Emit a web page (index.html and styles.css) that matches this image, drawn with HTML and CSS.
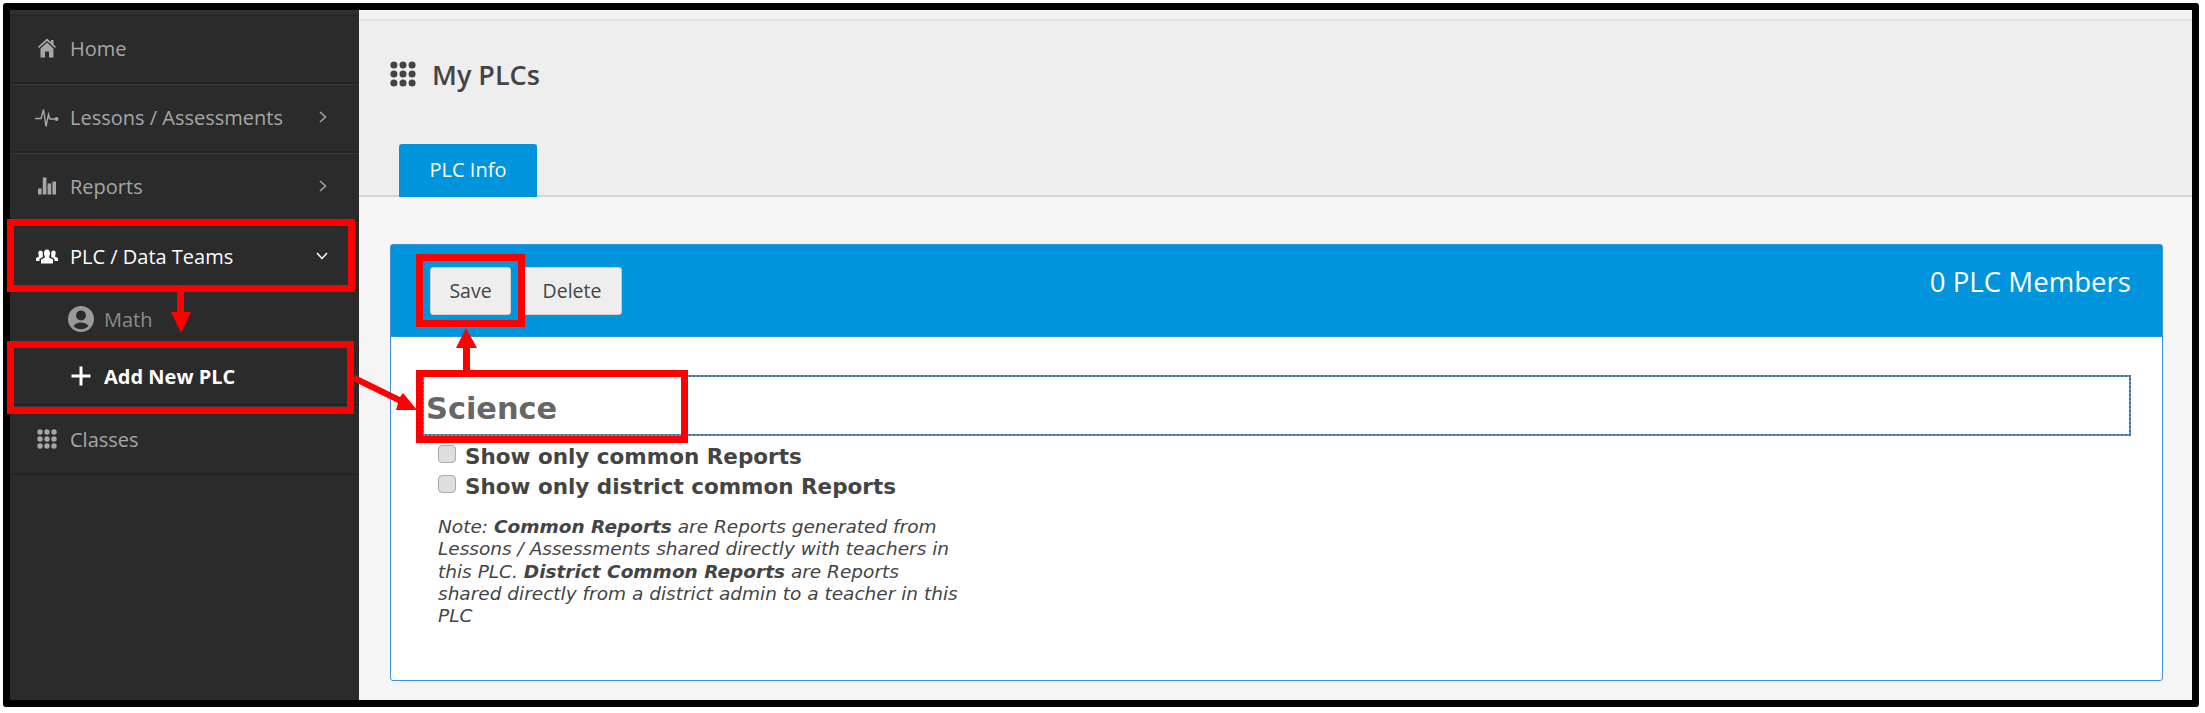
FILE: index.html
```html
<!DOCTYPE html>
<html lang="en">
<head>
<meta charset="utf-8">
<title>My PLCs</title>
<link rel="stylesheet" href="styles.css">
</head>
<body>
<div class="frame">
  <nav class="sidebar">
    <a class="item">
      <svg class="ico" viewBox="-3 -1.500 24 22"><path d="M9 0 L13 3.600 V1.500 H15.500 V5.900 L18 8.300 L17 9.600 L9 2.600 L1 9.600 L0 8.300 Z M2.500 10 L9 4 L15.500 10 V19 H11 V13 H7 V19 H2.500 Z"/></svg>
      <span>Home</span>
    </a>
    <a class="item">
      <svg class="ico" viewBox="0 -0.500 24 22"><path class="ln" d="M0 12 H6 L8.500 3 L11 20 L13.500 8 L15 12.500 H20"/><circle cx="21.500" cy="12.500" r="2"/></svg>
      <span>Lessons / Assessments</span>
      <svg class="chev" viewBox="0 0 8 12"><path d="M1 1 L6.500 6 L1 11"/></svg>
    </a>
    <a class="item">
      <svg class="ico" viewBox="-3 -2.500 24 22"><path d="M0 11 H3.600 V17 H0 Z M4.800 0 H8.400 V17 H4.800 Z M9.600 6 H13.200 V17 H9.600 Z M14.400 4 H18 V17 H14.400 Z"/></svg>
      <span>Reports</span>
      <svg class="chev" viewBox="0 0 8 12"><path d="M1 1 L6.500 6 L1 11"/></svg>
    </a>
    <a class="item active">
      <svg class="ico" viewBox="-1 -3.500 24 22"><path d="M11 1 C13.500 1 14 3 14 5 C14 7 13 8 13 9 L17 11 V15 H5 V11 L9 9 C9 8 8 7 8 5 C8 3 8.500 1 11 1 Z M4.500 2 C6 2 6.800 3 6.800 4.500 C6.800 6 6.500 7.500 7 8.300 L3.500 10.500 V12.500 H0 V9.500 L3 8 C3 7 2.300 6 2.300 4.500 C2.300 3 3 2 4.500 2 Z M17.500 2 C19 2 19.700 3 19.700 4.500 C19.700 6 19 7 19 8 L22 9.500 V12.500 H18.500 V10.500 L15 8.300 C15.500 7.500 15.200 6 15.200 4.500 C15.200 3 16 2 17.500 2 Z"/></svg>
      <span>PLC / Data Teams</span>
      <svg class="chev-down" viewBox="0 0 12 8"><path d="M1 1 L6 6.500 L11 1"/></svg>
    </a>
    <a class="subitem math">
      <svg class="ico-sub" viewBox="0 0 26 26"><path fill-rule="evenodd" d="M13 0 A13 13 0 1 0 13 26 A13 13 0 1 0 13 0 Z M13 4.500 A5 5 0 1 1 13 14.500 A5 5 0 1 1 13 4.500 Z M13 16.500 C16.500 16.500 19 18 20.500 20 A10.300 10.300 0 0 1 5.500 20 C7 18 9.500 16.500 13 16.500 Z"/></svg>
      <span>Math</span>
    </a>
    <a class="subitem add">
      <svg class="ico-sub" viewBox="0 0 26 26"><path d="M11.500 3.500 H14.500 V11.500 H22.500 V14.500 H14.500 V22.500 H11.500 V14.500 H3.500 V11.500 H11.500 Z"/></svg>
      <span>Add New PLC</span>
    </a>
    <a class="item">
      <svg class="ico" viewBox="-2 -1 24 22"><circle cx="3" cy="3" r="2.700"/><circle cx="10" cy="3" r="2.700"/><circle cx="17" cy="3" r="2.700"/><circle cx="3" cy="10" r="2.700"/><circle cx="10" cy="10" r="2.700"/><circle cx="17" cy="10" r="2.700"/><circle cx="3" cy="17" r="2.700"/><circle cx="10" cy="17" r="2.700"/><circle cx="17" cy="17" r="2.700"/></svg>
      <span>Classes</span>
    </a>
  </nav>

  <main class="main">
    <header class="head">
      <div class="title-row">
        <svg class="title-ico" viewBox="0 0 20 20"><circle cx="3" cy="3" r="2.700"/><circle cx="10" cy="3" r="2.700"/><circle cx="17" cy="3" r="2.700"/><circle cx="3" cy="10" r="2.700"/><circle cx="10" cy="10" r="2.700"/><circle cx="17" cy="10" r="2.700"/><circle cx="3" cy="17" r="2.700"/><circle cx="10" cy="17" r="2.700"/><circle cx="17" cy="17" r="2.700"/></svg>
        <h1>My PLCs</h1>
      </div>
      <div class="tab">PLC Info</div>
    </header>
    <section class="content">
      <div class="panel">
        <div class="panel-head">
          <div class="btns">
            <button class="btn save">Save</button>
            <button class="btn del">Delete</button>
          </div>
          <div class="members">0 PLC Members</div>
        </div>
        <div class="panel-body">
          <div class="name-input">Science</div>
          <label class="check"><input type="checkbox"><span>Show only common Reports</span></label>
          <label class="check"><input type="checkbox"><span>Show only district common Reports</span></label>
          <p class="note">Note: <b>Common Reports</b> are Reports generated from Lessons / Assessments shared directly with teachers in this PLC. <b>District Common Reports</b> are Reports shared directly from a district admin to a teacher in this PLC</p>
        </div>
      </div>
    </section>
  </main>
</div>

<div class="mark m1"></div>
<div class="mark m2"></div>
<div class="mark m3"></div>
<div class="mark m4"></div>
<svg class="arrows" viewBox="0 0 2205 713">
  <path d="M177 292 H184 V312 H191 L181 333 L171 312 H177 Z"/>
  <path d="M463 370 H470 V348 H477 L466 328 L456 348 H463 Z"/>
  <path d="M355 375 L400 397 L403 393 L417 410 L396 410 L398 403 L353 381 Z"/>
</svg>
</body>
</html>
```
FILE: styles.css
```css
* { box-sizing: border-box; }
html, body { margin: 0; padding: 0; background: #fff; }
body { width: 2205px; height: 713px; position: relative; overflow: hidden; font-family: "Open Sans", sans-serif; }

.frame {
  margin: 3px 0 0 3px;
  width: 2196px;
  height: 704px;
  border: 7px solid #000;
  border-radius: 3px;
  display: flex;
  background: #000;
}

.sidebar {
  width: 349px;
  flex: none;
  background: #2b2b2b;
  padding-top: 5px;
  box-shadow: inset 0 4px 0 #2f2f2f;
}
.item {
  display: flex;
  align-items: center;
  height: 69px;
  padding: 0 0 2px 25px;
  border-top: 1px solid #3a3a3a;
  border-bottom: 2px solid #232323;
  color: #a6a6a6;
  font-size: 20px;
  position: relative;
}
.item:first-child { border-top: 1px solid #232323; }
.ico { width: 24px; height: 22px; margin-right: 11px; fill: #a6a6a6; flex: none; }
.ln { fill: none; stroke: #a6a6a6; stroke-width: 1.400; }
.chev { position: absolute; left: 309px; width: 8px; height: 12px; fill: none; stroke: #a6a6a6; stroke-width: 1.500; }
.chev-down { position: absolute; left: 306px; width: 12px; height: 8px; fill: none; stroke: #fff; stroke-width: 1.500; }
.active { color: #fff; padding-bottom: 0; }
.active .ico { fill: #fff; }

.subitem {
  display: flex;
  align-items: center;
  padding-left: 58px;
  font-size: 20px;
}
.ico-sub { width: 26px; height: 26px; margin-right: 10px; flex: none; }
.math { height: 57px; color: #8b8b8b; border-bottom: 1px solid #232323; }
.math .ico-sub { fill: #9a9a9a; }
.add { height: 58px; color: #fff; font-weight: 700; border-bottom: 2px solid #232323; }
.add .ico-sub { fill: #fff; }

.main { flex: 1; display: flex; flex-direction: column; background: #f5f5f5; }
.head {
  height: 187px;
  background: #eeeeee;
  border-bottom: 2px solid #d6d6d6;
  display: flex;
  flex-direction: column;
  box-shadow: inset 0 9px 0 #f2f2f2, inset 0 11px 0 #e4e4e4;
}
.title-row { display: flex; align-items: center; margin: 49px 0 0 31px; height: 30px; }
.title-ico { width: 26px; height: 26px; fill: #444; margin-right: 16px; }
h1 { margin: 0; font-size: 27px; font-weight: 600; color: #444; }
.tab {
  margin: 55px 0 -2px 40px;
  padding-bottom: 2px;
  width: 138px;
  height: 53px;
  flex: none;
  background: #0094dc;
  border-radius: 3px 3px 0 0;
  color: #fff;
  font-size: 20px;
  display: flex;
  align-items: center;
  justify-content: center;
}

.content { flex: 1; padding: 47px 29px 19px 31px; }
.panel { height: 437px; border: 1px solid #3d92e2; border-radius: 3px; background: #fff; display: flex; flex-direction: column; }
.panel-head {
  height: 92px;
  flex: none;
  background: #0094dc;
  border-bottom: 1px solid #2f8fe0;
  display: flex;
  justify-content: space-between;
  padding: 22px 31px 0 39px;
}
.btns { display: flex; gap: 11px; }
.btn {
  height: 48px;
  border: 1px solid #cfcfcf;
  border-radius: 3px;
  background: #eeeeee;
  color: #444;
  font: 400 19.500px "Open Sans", sans-serif;
  padding: 0 0 2px;
}
.save { width: 81px; }
.del { width: 100px; }
.members { color: #fff; font-size: 27.600px; line-height: 28px; }

.panel-body { padding: 38px 31px 0; flex: 1; font-family: "DejaVu Sans", sans-serif; }
.name-input {
  height: 61px;
  border: 2px solid #45a0e6;
  outline: 2px dotted #666;
  outline-offset: -2px;
  padding: 5px 2px 0;
  display: flex;
  align-items: center;
  font-size: 30.400px;
  font-weight: 700;
  color: #666;
  margin-bottom: 5px;
}
.check { display: flex; align-items: center; height: 30px; margin-left: 16px; color: #444; font-size: 21.500px; font-weight: 700; }
.check + .check { height: 31px; }
.check input {
  appearance: none;
  width: 18px;
  height: 18px;
  margin: -5px 9px 0 0;
  border: 1px solid #ababab;
  border-radius: 4px;
  background: #dedede;
}
.note { margin: 14px 0 0 16px; width: 530px; font-size: 18.500px; line-height: 22.300px; font-style: italic; color: #444; }

.mark { position: absolute; border: 7px solid #f00; }
.m1 { left: 7px; top: 219px; width: 348px; height: 73px; }
.m2 { left: 7px; top: 341px; width: 347px; height: 73px; }
.m3 { left: 416px; top: 254px; width: 109px; height: 73px; }
.m4 { left: 416px; top: 370px; width: 272px; height: 73px; }
.arrows { position: absolute; left: 0; top: 0; width: 2205px; height: 713px; fill: #f00; pointer-events: none; }
```
